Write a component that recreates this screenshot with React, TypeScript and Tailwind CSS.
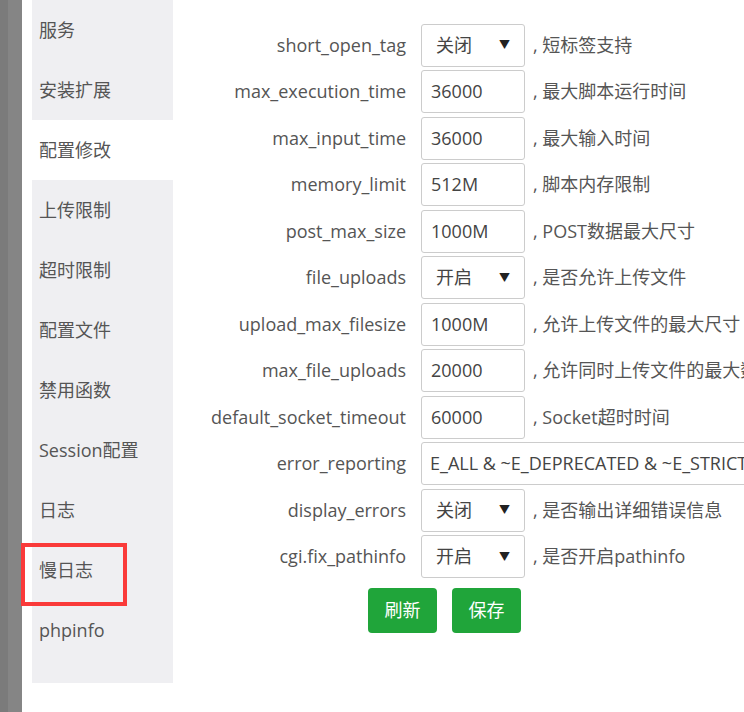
import React from "react";

const menu = [
  "服务",
  "安装扩展",
  "配置修改",
  "上传限制",
  "超时限制",
  "配置文件",
  "禁用函数",
  "Session配置",
  "日志",
  "慢日志",
  "phpinfo",
];

type Row = {
  name: string;
  kind: "select" | "input" | "wide";
  value: string;
  desc?: string;
};

const rows: Row[] = [
  { name: "short_open_tag", kind: "select", value: "关闭", desc: "短标签支持" },
  { name: "max_execution_time", kind: "input", value: "36000", desc: "最大脚本运行时间" },
  { name: "max_input_time", kind: "input", value: "36000", desc: "最大输入时间" },
  { name: "memory_limit", kind: "input", value: "512M", desc: "脚本内存限制" },
  { name: "post_max_size", kind: "input", value: "1000M", desc: "POST数据最大尺寸" },
  { name: "file_uploads", kind: "select", value: "开启", desc: "是否允许上传文件" },
  { name: "upload_max_filesize", kind: "input", value: "1000M", desc: "允许上传文件的最大尺寸" },
  { name: "max_file_uploads", kind: "input", value: "20000", desc: "允许同时上传文件的最大数量" },
  { name: "default_socket_timeout", kind: "input", value: "60000", desc: "Socket超时时间" },
  { name: "error_reporting", kind: "wide", value: "E_ALL & ~E_DEPRECATED & ~E_STRICT" },
  { name: "display_errors", kind: "select", value: "关闭", desc: "是否输出详细错误信息" },
  { name: "cgi.fix_pathinfo", kind: "select", value: "开启", desc: "是否开启pathinfo" },
];

export default function App() {
  return (
    <div
      className="relative flex h-[712px] w-[744px] overflow-hidden bg-white text-[18px] text-[#333]"
      style={{ fontFamily: '"Open Sans", "Noto Sans CJK SC", sans-serif' }}
    >
      {/* dimmed page behind the dialog */}
      <div className="flex w-[22px] shrink-0">
        <div className="w-[8px] bg-[#7b7b7b]" />
        <div className="flex-1 bg-[#858585]" />
      </div>
      <div className="w-[10px] shrink-0 bg-white" />

      {/* Side menu */}
      <div className="flex h-[683px] w-[141px] shrink-0 flex-col bg-[#efeff2]">
        {menu.map((item, i) => (
          <div
            key={item}
            className={`flex h-[60px] items-center whitespace-nowrap pl-[7px] text-[#555] ${
              i === 2 ? "bg-white" : ""
            }`}
          >
            {item}
          </div>
        ))}
      </div>

      {/* Settings form */}
      <div className="flex shrink-0 flex-col pt-[22px]">
        {rows.map((row) => (
          <div key={row.name} className="flex h-[46.5px] items-center">
            <div className="w-[248px] whitespace-nowrap pr-[15px] text-right text-[#555]">{row.name}</div>
            {row.kind === "wide" ? (
              <div className="flex h-[43px] w-[420px] items-center rounded-[3px] border border-[#ccc] pl-[8px] whitespace-nowrap text-[#444]">
                {row.value}
              </div>
            ) : row.kind === "select" ? (
              <div className="flex h-[43px] w-[104px] items-center justify-between rounded-[3px] border border-[#ccc] pl-[14px] pr-[14px] text-[#444]">
                <span>{row.value}</span>
                <span className="text-[11px] text-[#222]">▼</span>
              </div>
            ) : (
              <div className="flex h-[43px] w-[104px] items-center rounded-[3px] border border-[#ccc] pl-[9px] text-[#444]">
                {row.value}
              </div>
            )}
            {row.desc && (
              <div className="ml-[8px] whitespace-nowrap text-[#555]">, {row.desc}</div>
            )}
          </div>
        ))}
        <div className="mt-[8px] flex gap-[15px] pl-[195px]">
          <button className="h-[45px] w-[69px] rounded-[4px] bg-[#20a53a] text-white">刷新</button>
          <button className="h-[45px] w-[69px] rounded-[4px] bg-[#20a53a] text-white">保存</button>
        </div>
      </div>

      {/* red annotation box */}
      <div className="absolute left-[21px] top-[543px] h-[63px] w-[106px] border-[4px] border-[#fa3a3a]" />
    </div>
  );
}
